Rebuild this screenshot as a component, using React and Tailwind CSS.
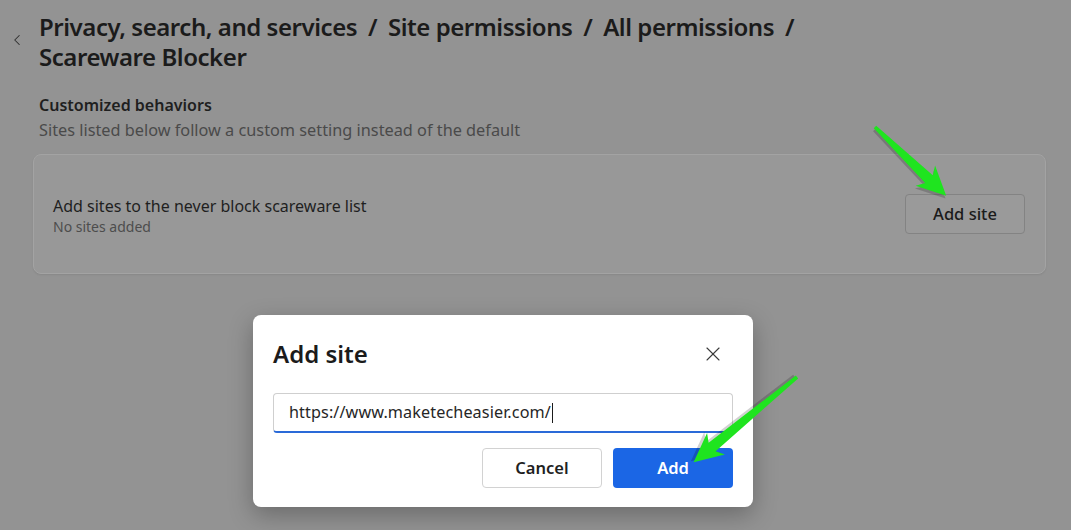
import { X, ChevronLeft } from 'lucide-react'

const FONT = { fontFamily: '"Noto Sans", "Open Sans", sans-serif' }

function Arrow({ x, y, len, angle }) {
  // arrow drawn pointing right, tip at (len, 0), then rotated around the tail
  const L = len
  const pts = [
    [0, -1.8], [L - 24, -5.5], [L - 29, -14], [L, 0], [L - 29, 14], [L - 24, 5.5], [0, 1.8],
  ].map(p => p.join(',')).join(' ')
  return (
    <g transform={`translate(${x} ${y}) rotate(${angle})`}>
      <polygon points={pts} fill="#000" opacity="0.18" transform="translate(1.5 2.5)" />
      <polygon points={pts} fill="#1fe41f" />
    </g>
  )
}

export default function App() {
  return (
    <div className="relative w-[1071px] h-[530px] overflow-hidden bg-[#939393]" style={FONT}>
      {/* settings page, dimmed */}
      <div className="relative pl-[33px] pr-[25px] pt-[12px]">
        <ChevronLeft className="absolute left-[8px] top-[31px] text-[#2e2e2e]" size={18} strokeWidth={1.4} />
        <h1 className="pl-[6px] text-[24px] leading-[30px] font-semibold text-[#1b1b1b] tracking-[-0.45px]">
          Privacy, search, and services <span className="mx-[5px]">/</span> Site permissions <span className="mx-[5px]">/</span> All permissions <span className="mx-[5px]">/</span>
          <br />
          Scareware Blocker
        </h1>

        <div className="pl-[6px] mt-[21px]">
          <p className="text-[16px] leading-[24px] font-semibold text-[#1f1f1f]">Customized behaviors</p>
          <p className="mt-[1px] text-[16.3px] leading-[24px] text-[#4a4a4a]">Sites listed below follow a custom setting instead of the default</p>
        </div>

        <div className="mt-[12px] h-[120px] rounded-[8px] border border-[#a3a3a3] bg-[#989898] shadow-[0_1px_2px_rgba(0,0,0,0.08)] flex items-center justify-between pl-[19px] pr-[20px]">
          <div className="pt-[4px]">
            <p className="text-[16px] leading-[22px] text-[#1f1f1f]">Add sites to the never block scareware list</p>
            <p className="text-[14px] leading-[20px] text-[#4d4d4d]">No sites added</p>
          </div>
          <button className="w-[120px] h-[40px] rounded-[4px] border border-[#838383] bg-[#9a9a9a] text-[16.5px] font-medium text-[#1b1b1b]">
            Add site
          </button>
        </div>
      </div>

      {/* dialog */}
      <div className="absolute left-[253px] top-[315px] w-[500px] h-[192px] rounded-[8px] bg-white shadow-[0_8px_24px_rgba(0,0,0,0.28)] px-[20px] pt-[22px]">
        <div className="flex items-center justify-between">
          <h2 className="text-[24px] leading-[34px] font-semibold text-[#1b1b1b]">Add site</h2>
          <X className="mr-[8px] text-[#3a3a3a]" size={24} strokeWidth={1.1} />
        </div>
        <div className="mt-[22px] h-[40px] rounded-[4px] border border-[#cfcfcf] border-b-[2px] border-b-[#2a6ad8] flex items-center pl-[15px]">
          <span className="text-[16.2px] tracking-[0.1px] text-[#262626]">https://www.maketecheasier.com/</span>
          <span className="ml-[1px] w-[1px] h-[20px] bg-[#1b1b1b]" />
        </div>
        <div className="mt-[15px] flex justify-end gap-[11px]">
          <button className="w-[120px] h-[40px] rounded-[4px] border border-[#d2d2d2] bg-white text-[16.5px] font-semibold text-[#1f1f1f]">
            Cancel
          </button>
          <button className="w-[120px] h-[40px] rounded-[4px] bg-[#1b66e5] text-[16.5px] font-semibold text-white">
            Add
          </button>
        </div>
      </div>

      {/* annotation arrows */}
      <svg className="absolute inset-0 pointer-events-none" width="1071" height="530">
        <Arrow x={875} y={127} len={99} angle={44} />
        <Arrow x={797} y={377} len={134} angle={140.5} />
      </svg>
    </div>
  )
}
